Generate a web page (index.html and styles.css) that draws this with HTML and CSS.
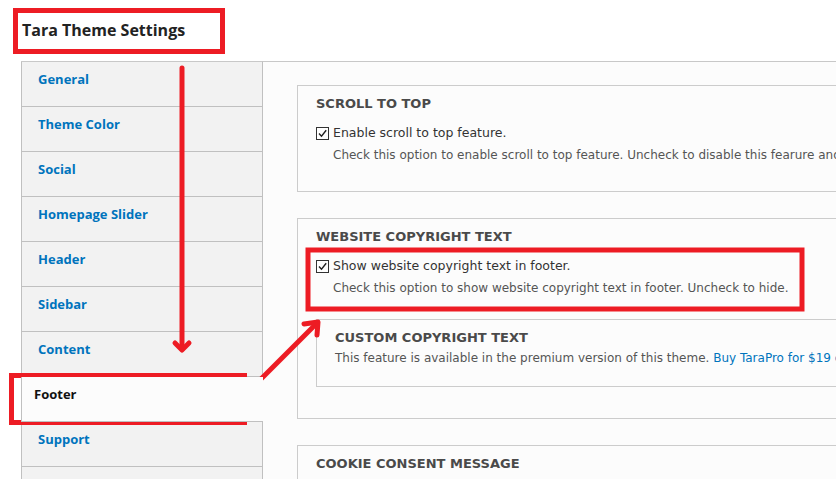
FILE: index.html
```html
<!DOCTYPE html>
<html>
<head>
<meta charset="utf-8">
<link rel="stylesheet" href="styles.css">
</head>
<body>
<div class="page">
  <h1 class="title">Tara Theme Settings</h1>
  <div class="layout">
    <ul class="tabs">
      <li class="tab"><a class="tab-link">General</a></li>
      <li class="tab"><a class="tab-link">Theme Color</a></li>
      <li class="tab"><a class="tab-link">Social</a></li>
      <li class="tab"><a class="tab-link">Homepage Slider</a></li>
      <li class="tab"><a class="tab-link">Header</a></li>
      <li class="tab"><a class="tab-link">Sidebar</a></li>
      <li class="tab"><a class="tab-link">Content</a></li>
      <li class="tab active"><a class="tab-link">Footer</a></li>
      <li class="tab"><a class="tab-link">Support</a></li>
      <li class="tab"><a class="tab-link">&nbsp;</a></li>
    </ul>
    <div class="panel">
      <div class="fs">
        <div class="fs-title">Scroll to top</div>
        <div class="item">
          <label class="check-row"><span class="cb"><svg viewBox="0 0 13 13" width="13" height="13"><path d="M3 6.5 L5.5 9.2 L10.2 3.3" fill="none" stroke="#222" stroke-width="1.4"/></svg></span><span class="label">Enable scroll to top feature.</span></label>
          <div class="desc">Check this option to enable scroll to top feature. Uncheck to disable this fearure and hide scroll to top icon.</div>
        </div>
      </div>
      <div class="fs">
        <div class="fs-title">Website copyright text</div>
        <div class="item">
          <label class="check-row"><span class="cb"><svg viewBox="0 0 13 13" width="13" height="13"><path d="M3 6.5 L5.5 9.2 L10.2 3.3" fill="none" stroke="#222" stroke-width="1.4"/></svg></span><span class="label">Show website copyright text in footer.</span></label>
          <div class="desc">Check this option to show website copyright text in footer. Uncheck to hide.</div>
        </div>
        <div class="fs nested">
          <div class="fs-title">Custom copyright text</div>
          <div class="item info">This feature is available in the premium version of this theme. <a class="link">Buy TaraPro for $19 only.</a></div>
        </div>
      </div>
      <div class="fs">
        <div class="fs-title">Cookie consent message</div>
        <div class="item">
          <label class="check-row"><span class="cb"></span><span class="label">Show cookie consent message.</span></label>
        </div>
      </div>
    </div>
  </div>
  <svg class="annot" width="836" height="479" viewBox="0 0 836 479">
    <g fill="none" stroke="#ed1c24">
      <rect x="15.5" y="10.5" width="207" height="41" stroke-width="5"/>
      <rect x="11.5" y="375.5" width="233" height="47" stroke-width="5"/>
      <rect x="308" y="250" width="494" height="59" stroke-width="5"/>
      <g stroke-width="5" stroke-linecap="round" stroke-linejoin="round">
        <path d="M182 68 L182 349"/>
        <path d="M175 343 L182 350 L189 343"/>
        <path d="M259 381 L317 323"/>
        <path d="M304 324 L318 322 L317 335"/>
      </g>
    </g>
  </svg>
</div>
</body>
</html>
```
FILE: styles.css
```css
html, body {
  margin: 0;
  padding: 0;
  background: #fff;
  overflow: hidden;
}
body {
  width: 836px;
  height: 479px;
  font-family: "Open Sans", "Noto Sans", sans-serif;
  color: #333;
}
.page {
  position: relative;
  width: 836px;
  height: 479px;
  overflow: hidden;
}
.title {
  margin: 0;
  padding: 20px 0 0 22px;
  font-size: 16px;
  line-height: 20px;
  font-weight: 700;
  color: #222;
}
.layout {
  display: flex;
  margin: 21px 0 0 21px;
  width: 960px;
}
.tabs {
  list-style: none;
  margin: 0;
  padding: 0;
  width: 241px;
  flex: 0 0 241px;
  border-top: 1px solid #c8c8c8;
}
.tab {
  background: #f2f2f2;
  border-left: 1px solid #c0c0c0;
  border-bottom: 1px solid #c0c0c0;
  padding: 5px 0 0 16px;
  box-sizing: border-box;
  height: 45px;
}
.tab-link {
  font-size: 13px;
  line-height: 18px;
  font-weight: 700;
  color: #0074bd;
}
.tab.active {
  background: #fcfcfc;
  position: relative;
  z-index: 1;
  margin-right: -1px;
  padding-left: 12px;
}
.tab.active .tab-link {
  color: #111;
}
.panel {
  flex: 1;
  background: #fcfcfc;
  border-top: 1px solid #c8c8c8;
  border-left: 1px solid #c0c0c0;
  padding: 23px 0 0 34px;
  font-family: "DejaVu Sans", "Open Sans", sans-serif;
}
.fs {
  border: 1px solid #ccc;
  background: #fcfcfc;
  padding: 9px 18px 5px;
  margin-bottom: 26px;
}
.fs.nested {
  margin: 0 0 26px 0;
}
.fs-title {
  font-size: 13px;
  line-height: 18px;
  font-weight: 700;
  text-transform: uppercase;
  color: #4a4a4a;
}
.item {
  margin: 11px 0 22px;
}
.item.info {
  margin: 2px 0 14px;
  font-size: 12px;
  line-height: 18px;
  color: #555;
  white-space: nowrap;
}
.check-row {
  display: flex;
  align-items: center;
  gap: 4px;
  height: 18px;
}
.cb {
  width: 11px;
  height: 11px;
  border: 1px solid #333;
  background: #fff;
  position: relative;
  flex: 0 0 auto;
}
.cb svg {
  position: absolute;
  left: -1px;
  top: -1px;
}
.label {
  font-size: 12.5px;
  line-height: 18px;
  color: #333;
  white-space: nowrap;
}
.desc {
  margin: 4px 0 0 17px;
  font-size: 12px;
  line-height: 18px;
  color: #555;
  white-space: nowrap;
}
.link {
  color: #0074bd;
}
.annot {
  position: absolute;
  left: 0;
  top: 0;
  pointer-events: none;
}
```
